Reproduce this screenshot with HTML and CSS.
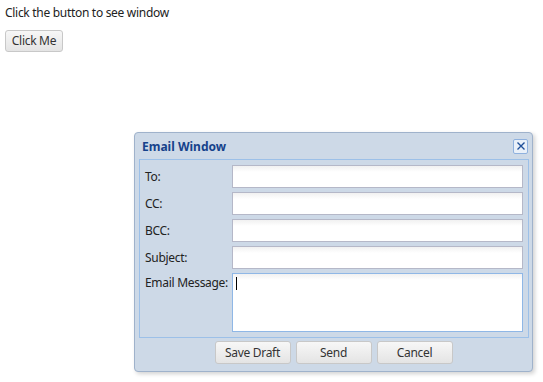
FILE: index.html
```html
<!DOCTYPE html>
<html>
<head>
<meta charset="utf-8">
<link rel="stylesheet" href="styles.css">
</head>
<body>
<div class="intro">Click the button to see window</div>
<button class="btn click-btn">Click Me</button>

<div class="window">
  <div class="win-header">
    <span class="win-title">Email Window</span>
    <span class="win-close">
      <svg width="10" height="10" viewBox="0 0 10 10"><path d="M1.5 1.5 L8.5 8.5 M8.5 1.5 L1.5 8.5" stroke="#1f4f99" stroke-width="1.4" fill="none"/></svg>
    </span>
  </div>
  <div class="win-body">
    <div class="form">
      <label class="lbl">To:</label><div class="field"></div>
      <label class="lbl">CC:</label><div class="field"></div>
      <label class="lbl">BCC:</label><div class="field"></div>
      <label class="lbl">Subject:</label><div class="field"></div>
      <label class="lbl lbl-top">Email Message:</label><div class="field area"><span class="caret"></span></div>
    </div>
  </div>
  <div class="win-buttons">
    <button class="btn wbtn">Save Draft</button>
    <button class="btn wbtn">Send</button>
    <button class="btn wbtn">Cancel</button>
  </div>
</div>
</body>
</html>
```
FILE: styles.css
```css
html, body {
  margin: 0;
  padding: 0;
  background: #ffffff;
}
body {
  padding: 5px;
  font-family: "Noto Sans", "Open Sans", sans-serif;
  font-size: 12px;
  letter-spacing: -0.3px;
  color: #222;
}
.intro {
  line-height: 15px;
  height: 15px;
}
.btn {
  font-family: "Noto Sans", "Open Sans", sans-serif;
  font-size: 12px;
  letter-spacing: -0.3px;
  color: #333;
  background: linear-gradient(#f7f7f7, #e4e4e4);
  border: 1px solid #c8c8c8;
  border-radius: 3px;
  padding: 0;
  height: 22px;
  line-height: 20px;
  cursor: pointer;
}
.click-btn {
  margin-top: 10px;
  width: 58px;
  display: block;
}
.window {
  position: absolute;
  left: 134px;
  top: 132px;
  width: 397px;
  height: 238px;
  background: #cdd9e7;
  border: 1px solid #9fb2cb;
  border-radius: 4px;
  box-shadow: 2px 2px 4px rgba(0,0,0,0.18);
  display: flex;
  flex-direction: column;
}
.win-header {
  height: 26px;
  display: flex;
  align-items: center;
  justify-content: space-between;
  padding: 0 4px 0 7px;
}
.win-title {
  font-weight: bold;
  color: #15428b;
  font-size: 12px;
  letter-spacing: 0;
}
.win-close {
  width: 13px;
  height: 13px;
  border: 1px solid #8fb1de;
  border-radius: 2px;
  background: #e9f0f9;
  display: flex;
  align-items: center;
  justify-content: center;
}
.win-body {
  margin: 0 3px 0 4px;
  border: 1px solid #9cc0e8;
  padding: 5px 5px 5px 5px;
}
.form {
  display: grid;
  grid-template-columns: 87px 1fr;
  row-gap: 4px;
  align-items: center;
}
.lbl {
  color: #222;
  line-height: 15px;
  white-space: nowrap;
}
.lbl-top {
  align-self: start;
  margin-top: 2px;
}
.field {
  height: 21px;
  background: linear-gradient(#f1f1f1, #ffffff 6px);
  border: 1px solid #b5b8c8;
}
.field.area {
  height: 57px;
  border-color: #8fb7e6;
  align-self: start;
  position: relative;
}
.caret {
  position: absolute;
  left: 3px;
  top: 3px;
  width: 1px;
  height: 13px;
  background: #000;
}
.win-buttons {
  display: flex;
  justify-content: center;
  gap: 5px;
  margin-top: 3px;
}
.wbtn {
  width: 76px;
  height: 23px;
}
```
